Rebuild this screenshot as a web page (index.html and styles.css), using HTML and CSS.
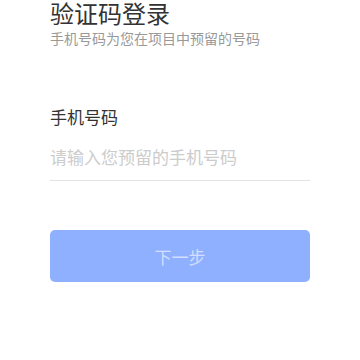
FILE: index.html
```html
<!DOCTYPE html>
<html lang="zh-CN">
<head>
  <meta charset="UTF-8">
  <meta name="viewport" content="width=device-width, initial-scale=1.0">
  <title>验证码登录</title>
  <link rel="stylesheet" href="styles.css">
</head>
<body>
  <div class="login">
    <h1 class="title">验证码登录</h1>
    <p class="subtitle">手机号码为您在项目中预留的号码</p>

    <!-- Phone -->
    <div class="field">
      <label class="field-label" for="phone">手机号码</label>
      <input type="tel" class="field-input" id="phone" placeholder="请输入您预留的手机号码" />
    </div>

    <button class="btn" disabled>下一步</button>
  </div>
</body>
</html>
```

FILE: styles.css
```css
/* Global Styles */
body {
  font-family: 'Noto Sans CJK SC', 'Noto Sans', sans-serif;
  margin: 0;
  padding: 0;
  background-color: #fff;
  color: #333;
}
.login {
  padding: 0 50px;
}
.title {
  margin: 0;
  font-size: 24px;
  font-weight: normal;
  line-height: 26px;
  color: #333;
}
.subtitle {
  margin: 2px 0 0;
  font-size: 14px;
  line-height: 20px;
  color: #999;
}

/* Phone field */
.field {
  margin-top: 57px;
}
.field-label {
  display: block;
  font-size: 17px;
  line-height: 24px;
  color: #333;
}
.field-input {
  display: block;
  box-sizing: border-box;
  width: 100%;
  height: 48px;
  margin-top: 4px;
  padding: 0;
  border: none;
  border-bottom: 1px solid #e3e3e3;
  outline: none;
  font-family: inherit;
  font-size: 17px;
  color: #333;
  background: transparent;
}
.field-input::placeholder {
  color: #ccc;
}

.btn {
  display: block;
  width: 100%;
  height: 52px;
  margin-top: 49px;
  border: none;
  border-radius: 5px;
  background-color: #8fb0ff;
  color: rgba(255, 255, 255, 0.6);
  font-family: inherit;
  font-size: 17px;
  cursor: pointer;
}
```
